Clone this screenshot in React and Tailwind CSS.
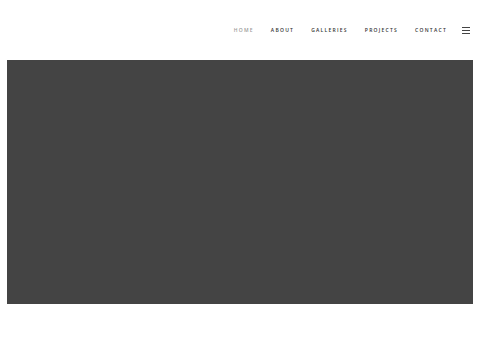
import { useState } from "react";

const links = ["HOME", "ABOUT", "GALLERIES", "PROJECTS", "CONTACT"];

export default function App() {
  const [active] = useState("HOME");

  return (
    <div className="w-[480px] h-[360px] bg-white" style={{ fontFamily: '"Open Sans", sans-serif' }}>
      <header className="h-[60px] flex items-center justify-end pr-[10px]">
        <nav className="flex items-center gap-[17px]">
          {links.map((link) => (
            <a
              key={link}
              href="#"
              className={`text-[5px] font-semibold tracking-[0.25em] leading-none ${
                link === active ? "text-[#9a9a9a]" : "text-[#333]"
              }`}
            >
              {link}
            </a>
          ))}
          <button className="flex flex-col gap-[2px] ml-[-2px]">
            <span className="block w-[8px] h-[1px] bg-[#444]"></span>
            <span className="block w-[8px] h-[1px] bg-[#444]"></span>
            <span className="block w-[8px] h-[1px] bg-[#444]"></span>
          </button>
        </nav>
      </header>
      <div className="mx-[7px] w-[466px] h-[244px] bg-[#444444]"></div>
    </div>
  );
}
